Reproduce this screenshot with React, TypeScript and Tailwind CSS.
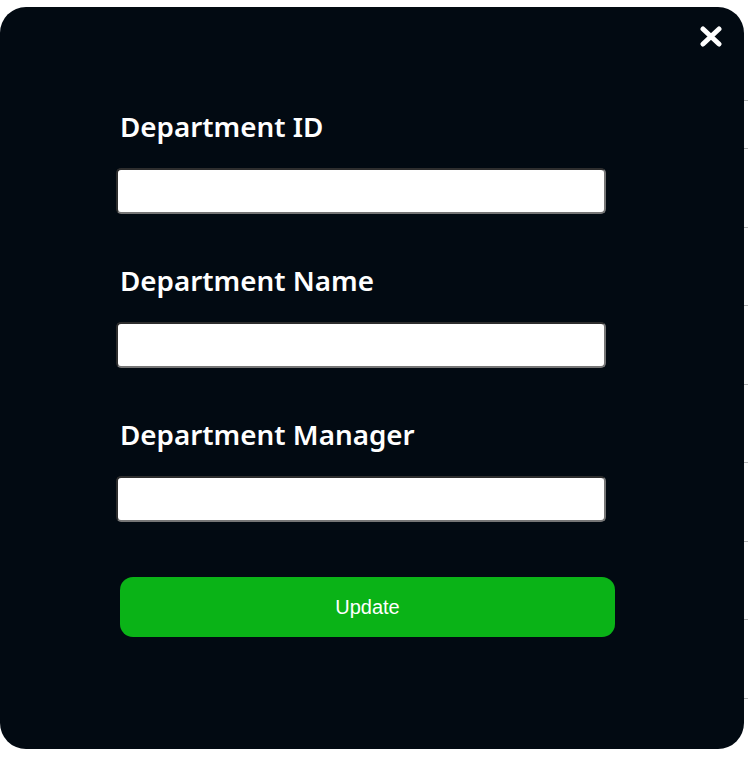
import { useState } from "react";

const rowLines = [48, 79, 78, 79, 78, 79, 78, 79];

export default function App() {
  const [form, setForm] = useState({ id: "", name: "", manager: "" });

  const fields: { key: keyof typeof form; label: string }[] = [
    { key: "id", label: "Department ID" },
    { key: "name", label: "Department Name" },
    { key: "manager", label: "Department Manager" },
  ];

  return (
    <div className="relative w-[748px] h-[759px] bg-white overflow-hidden">
      {/* table behind the modal */}
      <div className="mt-[100px] border-t border-[#c4c4c4]">
        {rowLines.map((h, i) => (
          <div key={i} className="border-b border-[#c4c4c4]" style={{ height: h }} />
        ))}
      </div>

      <div
        className="absolute left-0 top-[7px] w-[744px] h-[742px] rounded-[26px] bg-[#020a12] pt-[103px] pl-[116px]"
        style={{ fontFamily: '"Noto Sans", "Open Sans", sans-serif' }}
      >
        <button className="absolute top-[19px] right-[21px] w-[24px] h-[21px] flex items-center justify-center">
          <svg width="24" height="21" viewBox="0 0 24 21" fill="none">
            <path d="M4 3 L20 18 M20 3 L4 18" stroke="white" strokeWidth="5" strokeLinecap="round" />
          </svg>
        </button>

        {fields.map((f) => (
          <div key={f.key} className="mb-[50px]">
            <label className="block pl-[4px] text-[27.8px] leading-[32px] font-semibold text-white mb-[26px]">
              {f.label}
            </label>
            <input
              value={form[f.key]}
              onChange={(e) => setForm({ ...form, [f.key]: e.target.value })}
              className="block w-[490px] h-[46px] rounded-[5px] bg-white border-2 border-t-[#2e2e2e] border-l-[#2e2e2e] border-b-[#767676] border-r-[#767676] px-2 outline-none"
            />
          </div>
        ))}

        <button
          className="ml-[4px] mt-[5px] w-[495px] h-[60px] rounded-[13px] bg-[#0ab317] text-white text-[20px]"
          style={{ fontFamily: '"Liberation Sans", Arial, sans-serif' }}
        >
          Update
        </button>
      </div>
    </div>
  );
}
